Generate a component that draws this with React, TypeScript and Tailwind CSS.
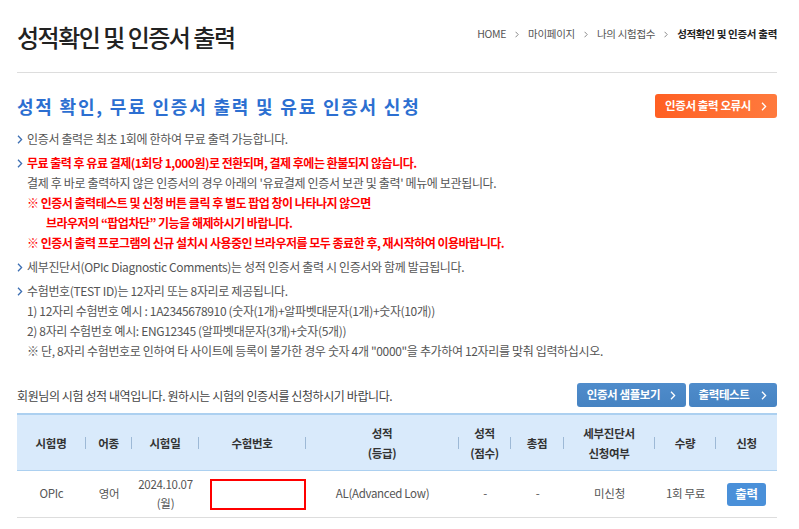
import React from "react";

const Chevron = ({ className = "" }: { className?: string }) => (
  <svg width="6" height="9" viewBox="0 0 6 9" className={className}>
    <path d="M1 0.8L4.6 4.5L1 8.2" fill="none" stroke="currentColor" strokeWidth="1.3" />
  </svg>
);

const Bullet = () => (
  <span className="w-[10px] h-[20px] flex items-center shrink-0 text-[#3d6fb3]">
    <Chevron />
  </span>
);

const cols = [
  { t: ["시험명"] },
  { t: ["어종"] },
  { t: ["시험일"] },
  { t: ["수험번호"] },
  { t: ["성적", "(등급)"] },
  { t: ["성적", "(점수)"] },
  { t: ["총점"] },
  { t: ["세부진단서", "신청여부"] },
  { t: ["수량"] },
  { t: ["신청"] },
];

export default function App() {
  return (
    <div className="w-[799px] min-h-[529px] bg-white pl-[17px] pr-[22px] font-['Noto_Sans_CJK_KR',sans-serif] text-[#555]">
      {/* Header */}
      <div className="flex items-center justify-between h-[73px] border-b border-[#dddddd]">
        <h1 className="text-[24px] font-medium tracking-[-1.5px] text-[#222] leading-[30px] pt-[2px]">
          성적확인 및 인증서 출력
        </h1>
        <div className="flex items-center gap-[8px] text-[10.5px] tracking-[-0.3px] text-[#555] pb-[4px]">
          <span>HOME</span>
          <Chevron className="text-[#888] scale-75" />
          <span>마이페이지</span>
          <Chevron className="text-[#888] scale-75" />
          <span>나의 시험접수</span>
          <Chevron className="text-[#888] scale-75" />
          <span className="font-bold text-[#222]">성적확인 및 인증서 출력</span>
        </div>
      </div>

      {/* Blue heading row */}
      <div className="mt-[21px] flex items-center justify-between h-[24px]">
        <h2 className="text-[18px] font-bold tracking-[1.8px] text-[#2c6fd1] leading-[24px]">
          성적 확인, 무료 인증서 출력 및 유료 인증서 신청
        </h2>
        <button className="h-[24px] w-[122px] rounded-[3px] bg-gradient-to-r from-[#ff5f22] to-[#ff7a3d] text-white text-[11.5px] font-bold tracking-[-0.4px] flex items-center justify-center gap-[10px]">
          <span>인증서 출력 오류시</span>
          <Chevron />
        </button>
      </div>

      {/* Notes */}
      <ul className="mt-[11px] text-[12px] tracking-[-0.35px] leading-[20px] text-[#555]">
        <li className="flex">
          <Bullet />
          <p>인증서 출력은 최초 1회에 한하여 무료 출력 가능합니다.</p>
        </li>
        <li className="flex mt-[4px]">
          <Bullet />
          <div>
            <p className="font-bold text-[#ff0000] tracking-[-0.5px]">
              무료 출력 후 유료 결제(1회당 1,000원)로 전환되며, 결제 후에는 환불되지 않습니다.
            </p>
            <p>결제 후 바로 출력하지 않은 인증서의 경우 아래의 '유료결제 인증서 보관 및 출력' 메뉴에 보관됩니다.</p>
            <p className="font-bold text-[#ff0000] tracking-[-0.5px]">
              ※ 인증서 출력테스트 및 신청 버튼 클릭 후 별도 팝업 창이 나타나지 않으면
            </p>
            <p className="font-bold text-[#ff0000] tracking-[-0.5px] pl-[19px]">
              브라우저의 “팝업차단” 기능을 해제하시기 바랍니다.
            </p>
            <p className="font-bold text-[#ff0000] tracking-[-0.5px]">
              ※ 인증서 출력 프로그램의 신규 설치시 사용중인 브라우저를 모두 종료한 후, 재시작하여 이용바랍니다.
            </p>
          </div>
        </li>
        <li className="flex mt-[4px]">
          <Bullet />
          <p>세부진단서(OPIc Diagnostic Comments)는 성적 인증서 출력 시 인증서와 함께 발급됩니다.</p>
        </li>
        <li className="flex mt-[4px]">
          <Bullet />
          <div>
            <p>수험번호(TEST ID)는 12자리 또는 8자리로 제공됩니다.</p>
            <p>1) 12자리 수험번호 예시 : 1A2345678910 (숫자(1개)+알파벳대문자(1개)+숫자(10개))</p>
            <p>2) 8자리 수험번호 예시: ENG12345 (알파벳대문자(3개)+숫자(5개))</p>
            <p>※ 단, 8자리 수험번호로 인하여 타 사이트에 등록이 불가한 경우 숫자 4개 "0000"을 추가하여 12자리를 맞춰 입력하십시오.</p>
          </div>
        </li>
      </ul>

      {/* Table intro row */}
      <div className="mt-[22px] flex items-center justify-between h-[24px]">
        <p className="text-[12px] tracking-[-0.4px] text-[#444] pt-[1px]">
          회원님의 시험 성적 내역입니다. 원하시는 시험의 인증서를 신청하시기 바랍니다.
        </p>
        <div className="flex gap-[3px]">
          <button className="h-[24px] w-[109px] rounded-[3px] bg-gradient-to-b from-[#4f8ccb] to-[#4683c2] text-white text-[11.5px] font-bold tracking-[-0.4px] flex items-center justify-center gap-[10px]">
            <span>인증서 샘플보기</span>
            <Chevron />
          </button>
          <button className="h-[24px] w-[88px] rounded-[3px] bg-gradient-to-b from-[#4f8ccb] to-[#4683c2] text-white text-[11.5px] font-bold tracking-[-0.4px] flex items-center justify-center gap-[12px]">
            <span>출력테스트</span>
            <Chevron />
          </button>
        </div>
      </div>

      {/* Table */}
      <div className="mt-[6px] text-[11.5px] tracking-[-0.3px]">
        <div className="grid grid-cols-[69px_46px_67px_107px_153px_52px_53px_91px_61px_61px] h-[58px] bg-[#d9eafb] border-t-2 border-b border-[#acd0f0]">
          {cols.map((c, i) => (
            <div key={i} className="flex items-center">
              <div className="flex-1 text-center font-bold text-[#333] leading-[20px]">
                {c.t.map((l, j) => (
                  <div key={j}>{l}</div>
                ))}
              </div>
              {i < cols.length - 1 && <span className="w-px h-[12px] bg-[#9db9d6]" />}
            </div>
          ))}
        </div>
        <div className="grid grid-cols-[69px_46px_67px_107px_153px_52px_53px_91px_61px_61px] h-[47px] border-b border-[#dddddd] text-[#555] items-center">
          <div className="text-center">OPIc</div>
          <div className="text-center">영어</div>
          <div className="text-center leading-[19px]">
            <div>2024.10.07</div>
            <div>(월)</div>
          </div>
          <div className="pl-[11px] flex items-center">
            <div className="w-[96px] h-[31px] border-2 border-[#ff0000]" />
          </div>
          <div className="text-center">AL(Advanced Low)</div>
          <div className="text-center">-</div>
          <div className="text-center">-</div>
          <div className="text-center">미신청</div>
          <div className="text-center">1회 무료</div>
          <div className="flex justify-center">
            <button className="w-[39px] h-[23px] rounded-[3px] bg-[#4a90d9] text-white text-[12.5px] font-bold tracking-[-0.3px]">
              출력
            </button>
          </div>
        </div>
      </div>
    </div>
  );
}
